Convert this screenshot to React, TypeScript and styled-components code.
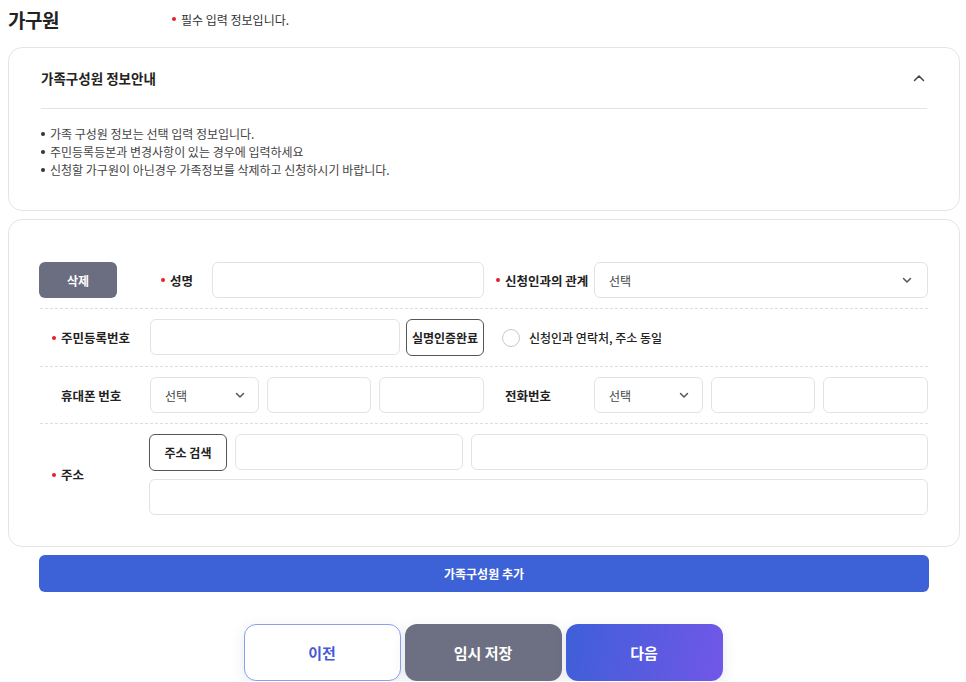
import styled, { createGlobalStyle } from "styled-components";

const GlobalStyle = createGlobalStyle`
  * { box-sizing: border-box; }
  body {
    margin: 0;
    background: #fff;
    font-family: "Noto Sans CJK KR", "Noto Sans", sans-serif;
    color: #222;
  }
`;

const ChevronDown = () => (
  <svg width="12" height="12" viewBox="0 0 12 12" fill="none">
    <path d="M2.5 4.5L6 8L9.5 4.5" stroke="#555" strokeWidth="1.5" strokeLinecap="round" strokeLinejoin="round" />
  </svg>
);

const ChevronUp = () => (
  <svg width="14" height="14" viewBox="0 0 14 14" fill="none">
    <path d="M2.5 9.5L7 5L11.5 9.5" stroke="#444" strokeWidth="1.5" strokeLinecap="round" strokeLinejoin="round" />
  </svg>
);

const Select = ({ wide }: { wide?: boolean }) => (
  <SelectBox $wide={wide}>
    <span>선택</span>
    <ChevronDown />
  </SelectBox>
);

const App = () => {
  return (
    <>
      <GlobalStyle />
      <Page>
        <Header>
          <PageTitle>가구원</PageTitle>
          <Note>
            <Dot />
            필수 입력 정보입니다.
          </Note>
        </Header>

        <Card $info>
          <InfoHead>
            <InfoTitle>가족구성원 정보안내</InfoTitle>
            <ChevronUp />
          </InfoHead>
          <InfoList>
            <li>가족 구성원 정보는 선택 입력 정보입니다.</li>
            <li>주민등록등본과 변경사항이 있는 경우에 입력하세요</li>
            <li>신청할 가구원이 아닌경우 가족정보를 삭제하고 신청하시기 바랍니다.</li>
          </InfoList>
        </Card>

        <Card>
          <Row>
            <Half>
              <DeleteButton>삭제</DeleteButton>
              <Label $narrow>
                <Dot />
                성명
              </Label>
              <Input />
            </Half>
            <Half>
              <Label>
                <Dot />
                신청인과의 관계
              </Label>
              <Select wide />
            </Half>
          </Row>

          <Row>
            <Half>
              <Label>
                <Dot />
                주민등록번호
              </Label>
              <Field>
                <Input />
                <OutlineButton>실명인증완료</OutlineButton>
              </Field>
            </Half>
            <Half>
              <RadioLabel>
                <Radio />
                신청인과 연락처, 주소 동일
              </RadioLabel>
            </Half>
          </Row>

          <Row>
            <Half>
              <Label $plain>휴대폰 번호</Label>
              <Triple>
                <Select />
                <Input />
                <Input />
              </Triple>
            </Half>
            <Half>
              <Label $plain>전화번호</Label>
              <Triple>
                <Select />
                <Input />
                <Input />
              </Triple>
            </Half>
          </Row>

          <Row $last>
            <Label>
              <Dot />
              주소
            </Label>
            <AddressBlock>
              <AddressTop>
                <OutlineButton>주소 검색</OutlineButton>
                <Input />
                <Input />
              </AddressTop>
              <Input />
            </AddressBlock>
          </Row>
        </Card>

        <AddButton>가족구성원 추가</AddButton>

        <Footer>
          <NavButton $kind="prev">이전</NavButton>
          <NavButton $kind="save">임시 저장</NavButton>
          <NavButton $kind="next">다음</NavButton>
        </Footer>
      </Page>
    </>
  );
};

const Page = styled.div`
  padding: 0 6px 0 8px;
`;

const Header = styled.div`
  display: flex;
  align-items: center;
  height: 38px;
  margin-bottom: 9px;
`;

const PageTitle = styled.h1`
  margin: 0;
  width: 164px;
  font-size: 19px;
  font-weight: 700;
  color: #222;
  letter-spacing: -0.5px;
`;

const Note = styled.span`
  display: flex;
  align-items: center;
  font-size: 12px;
  color: #333;
`;

const Dot = styled.i`
  display: inline-block;
  width: 4px;
  height: 4px;
  border-radius: 50%;
  background: #e5202e;
  margin-right: 5px;
  flex-shrink: 0;
`;

const Card = styled.section<{ $info?: boolean }>`
  border: 1px solid #e4e4e4;
  border-radius: 14px;
  background: #fff;
  padding: ${(p) => (p.$info ? "0 32px 31px" : "32px 31px 31px")};
  margin-bottom: 8px;
`;

const InfoHead = styled.div`
  display: flex;
  align-items: center;
  justify-content: space-between;
  height: 61px;
  padding-right: 1px;
  border-bottom: 1px solid #e3e3e3;
`;

const InfoTitle = styled.h2`
  margin: 0;
  font-size: 13.5px;
  font-weight: 700;
  color: #222;
`;

const InfoList = styled.ul`
  margin: 0;
  padding: 16px 0 0;
  list-style: none;
  font-size: 12px;
  line-height: 18px;
  color: #444;

  li {
    display: flex;
    align-items: center;
  }

  li::before {
    content: "";
    width: 4px;
    height: 4px;
    border-radius: 50%;
    background: #333;
    margin-right: 5px;
  }
`;

const Row = styled.div<{ $last?: boolean }>`
  display: flex;
  align-items: center;
  padding: 10px 0 ${(p) => (p.$last ? "0" : "10px")};
  border-bottom: ${(p) => (p.$last ? "none" : "1px dashed #dedede")};
`;

const Half = styled.div`
  flex: 1;
  display: flex;
  align-items: center;
  min-width: 0;
`;

const Label = styled.div<{ $narrow?: boolean; $plain?: boolean }>`
  display: flex;
  align-items: center;
  flex-shrink: 0;
  width: ${(p) => (p.$narrow ? "63px" : "110px")};
  padding-left: ${(p) => (p.$plain ? "21px" : "12px")};
  font-size: 12.5px;
  font-weight: 700;
  color: #222;
  white-space: nowrap;
`;

const Input = styled.div`
  flex: 1;
  height: 36px;
  min-width: 0;
  border: 1px solid #e3e3e3;
  border-radius: 6px;
  background: #fff;
`;

const SelectBox = styled.div<{ $wide?: boolean }>`
  flex: ${(p) => (p.$wide ? "1" : "none")};
  height: 36px;
  min-width: 0;
  display: flex;
  align-items: center;
  justify-content: space-between;
  padding: 0 ${(p) => (p.$wide ? "14px" : "12px")} 0 14px;
  border: 1px solid #e3e3e3;
  border-radius: 6px;
  font-size: 12px;
  color: #444;
`;

const Field = styled.div`
  flex: 1;
  display: flex;
  gap: 6px;
`;

const Triple = styled.div`
  flex: 1;
  display: grid;
  grid-template-columns: minmax(0, 1.04fr) minmax(0, 1fr) minmax(0, 1fr);
  gap: 8px;
`;

const DeleteButton = styled.button`
  width: 78px;
  height: 36px;
  margin: 0 32px 0 -1px;
  flex-shrink: 0;
  border: none;
  border-radius: 6px;
  background: #6b6d80;
  color: #fff;
  font-family: inherit;
  font-size: 12px;
  font-weight: 700;
`;

const OutlineButton = styled.button`
  width: 78px;
  height: 37px;
  flex-shrink: 0;
  border: 1.5px solid #555;
  border-radius: 6px;
  background: #fff;
  color: #222;
  font-family: inherit;
  font-size: 12px;
  font-weight: 700;
  padding: 0;
`;

const RadioLabel = styled.label`
  display: flex;
  align-items: center;
  gap: 9px;
  padding-left: 18px;
  font-size: 12px;
  font-weight: 500;
  color: #222;
`;

const Radio = styled.span`
  width: 18px;
  height: 18px;
  border-radius: 50%;
  border: 1.5px solid #c9c9c9;
  background: #fff;
`;

const AddressBlock = styled.div`
  flex: 1;
  display: flex;
  flex-direction: column;
  gap: 8px;
  margin-left: -1px;

  & > div:last-child {
    flex: none;
  }
`;

const AddressTop = styled.div`
  display: flex;
  gap: 8px;

  & > div:nth-child(2) {
    flex: 0 0 228px;
  }
`;

const AddButton = styled.button`
  display: block;
  width: calc(100% - 62px);
  height: 37px;
  margin: 0 0 32px 31px;
  border: none;
  border-radius: 6px;
  background: #3d61d6;
  color: #fff;
  font-family: inherit;
  font-size: 12px;
  font-weight: 700;
`;

const Footer = styled.div`
  display: flex;
  justify-content: center;
  gap: 4px;
  margin-left: -8px;
  margin-right: -6px;
`;

const NavButton = styled.button<{ $kind: "prev" | "save" | "next" }>`
  width: 157px;
  height: 57px;
  border-radius: 12px;
  font-family: inherit;
  font-size: 15px;
  font-weight: 700;
  box-shadow: 0 4px 14px rgba(60, 70, 120, 0.12);
  border: ${(p) => (p.$kind === "prev" ? "1.5px solid #8aa0ec" : "none")};
  color: ${(p) => (p.$kind === "prev" ? "#4558d6" : "#fff")};
  background: ${(p) =>
    p.$kind === "prev"
      ? "#fff"
      : p.$kind === "save"
      ? "#6d6f82"
      : "linear-gradient(100deg, #3e5fd8 0%, #7157e8 100%)"};
`;

export default App;
